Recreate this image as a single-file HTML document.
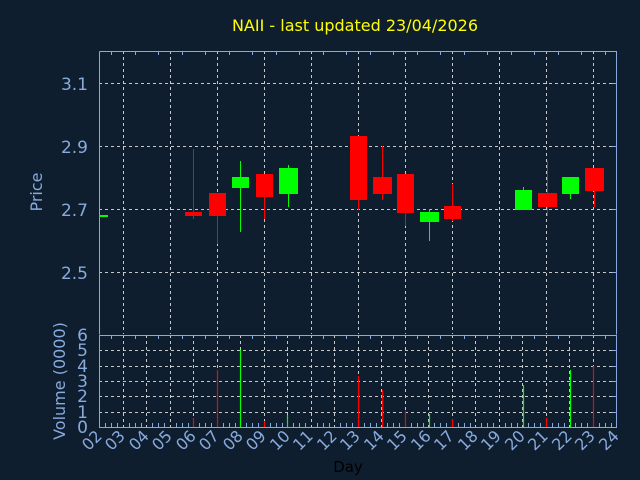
<!DOCTYPE html>
<html><head><meta charset="utf-8"><style>
html,body{margin:0;padding:0;background:#0f1e2e;}
svg{display:block;font-family:"DejaVu Sans","Liberation Sans",sans-serif;}
</style></head><body>
<svg width="640" height="480" viewBox="0 0 640 480" xmlns="http://www.w3.org/2000/svg">
<rect width="640" height="480" fill="#0f1e2e"/>
<text x="355" y="31" fill="#ffff00" font-size="16" text-anchor="middle">NAII - last updated 23/04/2026</text>
<g stroke="#c8c8c8" stroke-width="1" stroke-dasharray="3,3" fill="none">
<path d="M99 83.5H617M99 146.5H617M99 209.5H617M99 272.5H617"/>
<path d="M123.5 51V334M170.5 51V334M217.5 51V334M264.5 51V334M311.5 51V334M358.5 51V334M405.5 51V334M452.5 51V334M499.5 51V334M546.5 51V334M593.5 51V334"/>
<path d="M99 350.5H617M99 366.5H617M99 381.5H617M99 396.5H617M99 412.5H617"/>
<path d="M123.5 335V427M146.5 335V427M170.5 335V427M193.5 335V427M217.5 335V427M240.5 335V427M264.5 335V427M287.5 335V427M311.5 335V427M334.5 335V427M358.5 335V427M381.5 335V427M405.5 335V427M428.5 335V427M452.5 335V427M475.5 335V427M499.5 335V427M522.5 335V427M546.5 335V427M569.5 335V427M593.5 335V427"/>
</g>
<g stroke="#88aadd" stroke-width="1" fill="none">
<path d="M99.5 51.5H616.5V334.5M99.5 51.5V334.5"/>
<rect x="99.5" y="335.5" width="517" height="92"/>
<path d="M111.5 51V55M135.5 51V55M158.5 51V55M182.5 51V55M205.5 51V55M229.5 51V55M252.5 51V55M276.5 51V55M299.5 51V55M323.5 51V55M346.5 51V55M370.5 51V55M393.5 51V55M417.5 51V55M440.5 51V55M464.5 51V55M487.5 51V55M511.5 51V55M534.5 51V55M558.5 51V55M581.5 51V55M605.5 51V55"/>
<path d="M111.5 335V339M135.5 335V339M158.5 335V339M182.5 335V339M205.5 335V339M229.5 335V339M252.5 335V339M276.5 335V339M299.5 335V339M323.5 335V339M346.5 335V339M370.5 335V339M393.5 335V339M417.5 335V339M440.5 335V339M464.5 335V339M487.5 335V339M511.5 335V339M534.5 335V339M558.5 335V339M581.5 335V339M605.5 335V339"/>
<path d="M105.5 427V423M111.5 427V423M117.5 427V423M129.5 427V423M135.5 427V423M141.5 427V423M152.5 427V423M158.5 427V423M164.5 427V423M176.5 427V423M182.5 427V423M188.5 427V423M199.5 427V423M205.5 427V423M211.5 427V423M223.5 427V423M229.5 427V423M235.5 427V423M246.5 427V423M252.5 427V423M258.5 427V423M270.5 427V423M276.5 427V423M282.5 427V423M293.5 427V423M299.5 427V423M305.5 427V423M317.5 427V423M323.5 427V423M329.5 427V423M340.5 427V423M346.5 427V423M352.5 427V423M364.5 427V423M370.5 427V423M376.5 427V423M387.5 427V423M393.5 427V423M399.5 427V423M411.5 427V423M417.5 427V423M423.5 427V423M434.5 427V423M440.5 427V423M446.5 427V423M458.5 427V423M464.5 427V423M470.5 427V423M481.5 427V423M487.5 427V423M493.5 427V423M505.5 427V423M511.5 427V423M517.5 427V423M528.5 427V423M534.5 427V423M540.5 427V423M552.5 427V423M558.5 427V423M564.5 427V423M575.5 427V423M581.5 427V423M587.5 427V423M599.5 427V423M605.5 427V423M611.5 427V423"/>
<path d="M612 83.5H617M612 146.5H617M612 209.5H617M612 272.5H617M612 350.5H617M612 366.5H617M612 381.5H617M612 396.5H617M612 412.5H617"/>
</g>
<!-- candles -->
<g stroke-width="1">
<rect x="99" y="215" width="9" height="2" fill="#00ff00"/>
<line x1="193.5" y1="149" x2="193.5" y2="219" stroke="#ff0000"/><rect x="185" y="212" width="17" height="4" fill="#ff0000"/>
<line x1="217.5" y1="193" x2="217.5" y2="244" stroke="#ff0000"/><rect x="209" y="193" width="17" height="23" fill="#ff0000"/>
<line x1="240.5" y1="161" x2="240.5" y2="232" stroke="#00ff00"/><rect x="232" y="177" width="17" height="11" fill="#00ff00"/>
<line x1="264.5" y1="174" x2="264.5" y2="219" stroke="#ff0000"/><rect x="256" y="174" width="17" height="23" fill="#ff0000"/>
<line x1="288.5" y1="165" x2="288.5" y2="207" stroke="#00ff00"/><rect x="279" y="168" width="19" height="26" fill="#00ff00"/>
<line x1="358.5" y1="136" x2="358.5" y2="210" stroke="#ff0000"/><rect x="350" y="136" width="17" height="64" fill="#ff0000"/>
<line x1="382.5" y1="146" x2="382.5" y2="200" stroke="#ff0000"/><rect x="373" y="177" width="19" height="17" fill="#ff0000"/>
<line x1="405.5" y1="174" x2="405.5" y2="226" stroke="#ff0000"/><rect x="397" y="174" width="17" height="39" fill="#ff0000"/>
<line x1="429.5" y1="209" x2="429.5" y2="241" stroke="#00ff00"/><rect x="420" y="212" width="19" height="10" fill="#00ff00"/>
<line x1="452.5" y1="184" x2="452.5" y2="221" stroke="#ff0000"/><rect x="444" y="206" width="17" height="13" fill="#ff0000"/>
<line x1="523.5" y1="187" x2="523.5" y2="210" stroke="#00ff00"/><rect x="515" y="190" width="17" height="20" fill="#00ff00"/>
<line x1="547.5" y1="161" x2="547.5" y2="216" stroke="#ff0000"/><rect x="538" y="193" width="19" height="14" fill="#ff0000"/>
<line x1="570.5" y1="177" x2="570.5" y2="199" stroke="#00ff00"/><rect x="562" y="177" width="17" height="17" fill="#00ff00"/>
<line x1="594.5" y1="168" x2="594.5" y2="207" stroke="#ff0000"/><rect x="585" y="168" width="19" height="23" fill="#ff0000"/>
</g>
<!-- volume -->
<g stroke-width="1.2">
<line x1="193.5" y1="418" x2="193.5" y2="427" stroke="#ff0000"/>
<line x1="217.5" y1="370" x2="217.5" y2="427" stroke="#ff0000"/>
<line x1="240.5" y1="350" x2="240.5" y2="427" stroke="#00ff00"/>
<line x1="264.5" y1="421" x2="264.5" y2="427" stroke="#ff0000"/>
<line x1="287.5" y1="415" x2="287.5" y2="427" stroke="#00ff00"/>
<line x1="358.5" y1="376" x2="358.5" y2="427" stroke="#ff0000"/>
<line x1="382.5" y1="390" x2="382.5" y2="427" stroke="#ff0000"/>
<line x1="405.5" y1="411" x2="405.5" y2="427" stroke="#ff0000"/>
<line x1="429.5" y1="414" x2="429.5" y2="427" stroke="#00ff00"/>
<line x1="452.5" y1="419" x2="452.5" y2="427" stroke="#ff0000"/>
<line x1="523.5" y1="385" x2="523.5" y2="427" stroke="#00ff00"/>
<line x1="546.5" y1="418" x2="546.5" y2="427" stroke="#ff0000"/>
<line x1="570.5" y1="370" x2="570.5" y2="427" stroke="#00ff00"/>
<line x1="593.5" y1="366" x2="593.5" y2="427" stroke="#ff0000"/>
</g>
<g fill="#88aadd" font-size="17" text-anchor="end">
<text x="88" y="90">3.1</text><text x="88" y="153">2.9</text><text x="88" y="216">2.7</text><text x="88" y="279">2.5</text>
<text x="88" y="341">6</text><text x="88" y="356">5</text><text x="88" y="372">4</text><text x="88" y="387">3</text><text x="88" y="402">2</text><text x="88" y="418">1</text><text x="88" y="433">0</text>
</g>
<text transform="translate(42,192) rotate(-90)" fill="#88aadd" font-size="16" text-anchor="middle">Price</text>
<text transform="translate(65,381) rotate(-90)" fill="#88aadd" font-size="16" text-anchor="middle">Volume (0000)</text>
<g fill="#88aadd" font-size="16" text-anchor="end">
<text transform="translate(103,437) rotate(-45)">02</text>
<text transform="translate(126,437) rotate(-45)">03</text>
<text transform="translate(150,437) rotate(-45)">04</text>
<text transform="translate(173,437) rotate(-45)">05</text>
<text transform="translate(197,437) rotate(-45)">06</text>
<text transform="translate(220,437) rotate(-45)">07</text>
<text transform="translate(244,437) rotate(-45)">08</text>
<text transform="translate(267,437) rotate(-45)">09</text>
<text transform="translate(291,437) rotate(-45)">10</text>
<text transform="translate(314,437) rotate(-45)">11</text>
<text transform="translate(338,437) rotate(-45)">12</text>
<text transform="translate(361,437) rotate(-45)">13</text>
<text transform="translate(385,437) rotate(-45)">14</text>
<text transform="translate(408,437) rotate(-45)">15</text>
<text transform="translate(432,437) rotate(-45)">16</text>
<text transform="translate(455,437) rotate(-45)">17</text>
<text transform="translate(479,437) rotate(-45)">18</text>
<text transform="translate(502,437) rotate(-45)">19</text>
<text transform="translate(526,437) rotate(-45)">20</text>
<text transform="translate(549,437) rotate(-45)">21</text>
<text transform="translate(573,437) rotate(-45)">22</text>
<text transform="translate(596,437) rotate(-45)">23</text>
<text transform="translate(620,437) rotate(-45)">24</text>
</g>
<text x="348" y="472" fill="#000000" font-size="15" text-anchor="middle">Day</text>
</svg>
</body></html>
